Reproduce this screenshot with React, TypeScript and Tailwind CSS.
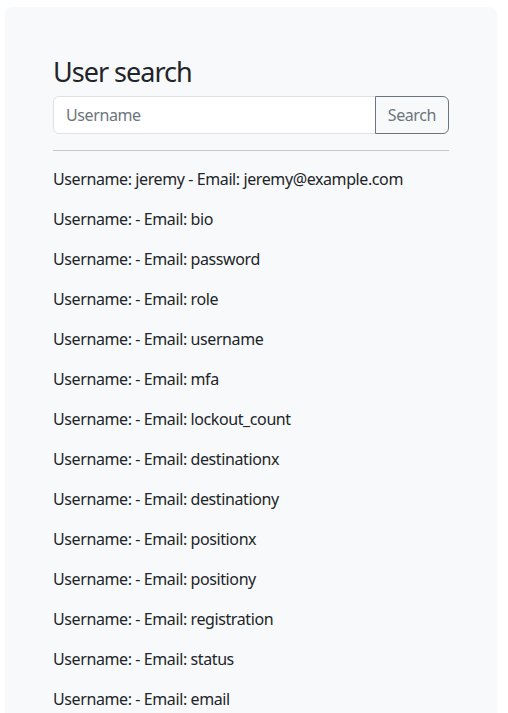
import React from "react";

const items = [
  "Username: jeremy - Email: jeremy@example.com",
  "Username: - Email: bio",
  "Username: - Email: password",
  "Username: - Email: role",
  "Username: - Email: username",
  "Username: - Email: mfa",
  "Username: - Email: lockout_count",
  "Username: - Email: destinationx",
  "Username: - Email: destinationy",
  "Username: - Email: positionx",
  "Username: - Email: positiony",
  "Username: - Email: registration",
  "Username: - Email: status",
  "Username: - Email: email",
];

export default function App() {
  return (
    <div
      className="h-[713px] overflow-hidden bg-white pt-[7px] pl-[5px] text-[#212529] tracking-[-0.4px]"
      style={{ fontFamily: '"Noto Sans", "Open Sans", sans-serif' }}
    >
      <div className="w-[492px] rounded-lg bg-[#f8f9fa] p-12">
        <h3 className="mb-2 text-[27px] leading-[33px] font-normal tracking-[-1px]">User search</h3>
        <div className="flex h-[38px] w-[396px]">
          <input
            className="min-w-0 flex-1 rounded-l-md border border-[#dee2e6] bg-white px-3 text-base text-[#212529] outline-none placeholder:text-[#6c757d]"
            placeholder="Username"
          />
          <button className="-ml-px rounded-r-md border border-[#6c757d] px-3 text-base text-[#6c757d]">
            Search
          </button>
        </div>
        <hr className="my-4 w-[396px] border-t border-[#c8c9ca]" />
        <div className="w-[396px]">
          {items.map((t, i) => (
            <p key={i} className="mb-4 text-base leading-6">
              {t}
            </p>
          ))}
        </div>
      </div>
    </div>
  );
}
